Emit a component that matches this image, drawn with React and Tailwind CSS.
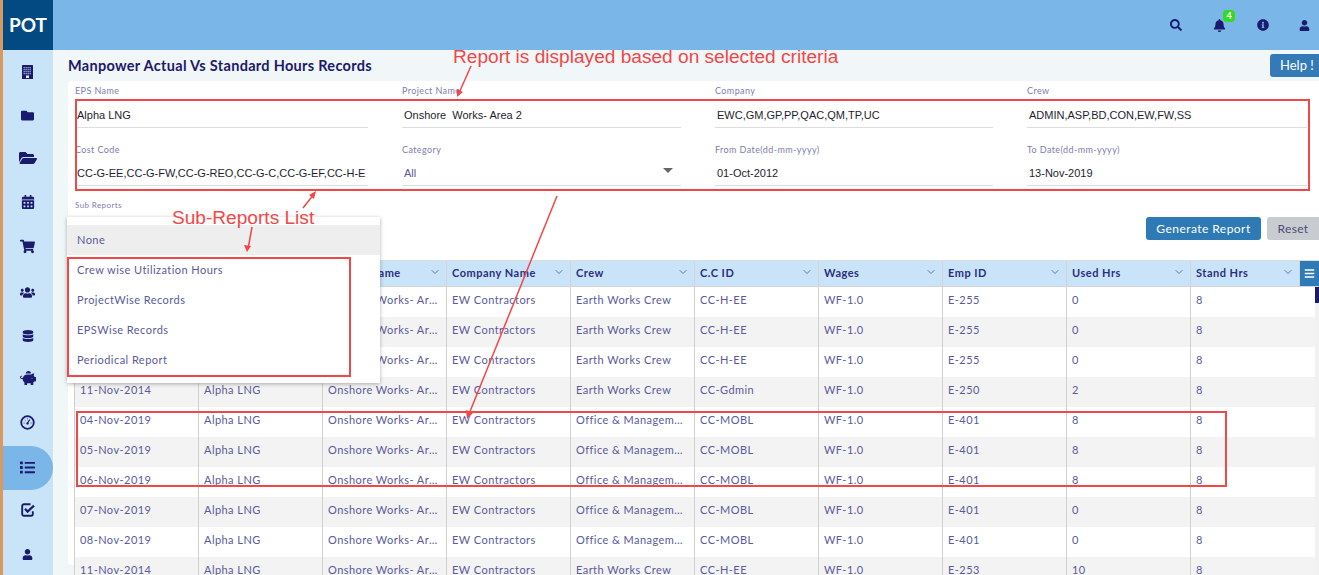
import React from "react";
import { FaFolder, FaFolderOpen, FaCalendarAlt, FaShoppingCart, FaUsers, FaDatabase, FaPiggyBank, FaList, FaUser, FaSearch, FaBell, FaInfoCircle, FaBars } from "react-icons/fa";
import { ChevronDown } from "lucide-react";

const lato = "font-['Lato','Noto_Sans',sans-serif]";

function BuildingIcon() {
  return (
    <svg width="11" height="14" viewBox="0 0 11 14">
      <rect width="11" height="14" rx="0.5" fill="#1a1a6e" />
      <g fill="#8f9fd0">
        {[2, 4, 6, 8].map((y) => [1.5, 3.5, 5.5, 7.5].map((x) => <rect key={`${x}-${y}`} x={x} y={y} width="1.4" height="1.3" />))}
      </g>
      <rect x="4" y="10.5" width="3" height="2.5" fill="#e8eefa" />
    </svg>
  );
}

function GaugeIcon() {
  return (
    <svg width="15" height="15" viewBox="0 0 15 15" fill="none">
      <circle cx="7.5" cy="7.5" r="6.3" stroke="#1a1a6e" strokeWidth="1.8" />
      <path d="M7.5 8 L9.8 4.6" stroke="#1a1a6e" strokeWidth="1.2" />
      <circle cx="7.5" cy="8.4" r="1.2" fill="#1a1a6e" />
      <path d="M3.6 8 H4.6 M4.8 5 L5.5 5.6 M7.5 3.4 V4.4 M10.6 8 H11.5" stroke="#1a1a6e" strokeWidth="0.9" />
    </svg>
  );
}

function CheckIcon() {
  return (
    <svg width="14" height="14" viewBox="0 0 14 14" fill="none">
      <path d="M11.8 8.2 V11 A1.8 1.8 0 0 1 10 12.8 H3 A1.8 1.8 0 0 1 1.2 11 V3 A1.8 1.8 0 0 1 3 1.2 H9.5" stroke="#1a1a6e" strokeWidth="1.9" />
      <path d="M4 5.8 L6.6 8.6 L13 2.6" stroke="#1a1a6e" strokeWidth="2.2" />
    </svg>
  );
}

const side = [
  [<BuildingIcon />, "pb-[1px]"], [<FaFolder size={13} />, "pb-[1px]"], [<FaFolderOpen size={18} />, "pb-[4px]"], [<FaCalendarAlt size={14} />, "pb-[4px]"],
  [<FaShoppingCart size={15} />, "pb-[4px]"], [<FaUsers size={15} />, "pb-0"], [<FaDatabase size={12} />, "pb-0"], [<FaPiggyBank size={16} />, "pb-[4px]"],
  [<GaugeIcon />, "pb-[4px]"], [<FaList size={15} />, "pb-[2px]"], [<CheckIcon />, "pb-[4px]"], [<FaUser size={11} />, "pb-[4px]"],
];

const fields = [
  ["EPS Name", "Alpha LNG", "w-[293px]"],
  ["Project Name", "Onshore  Works- Area 2", "w-[279px]"],
  ["Company", "EWC,GM,GP,PP,QAC,QM,TP,UC", "w-[278px]"],
  ["Crew", "ADMIN,ASP,BD,CON,EW,FW,SS", "w-[280px]"],
  ["Cost Code", "CC-G-EE,CC-G-FW,CC-G-REO,CC-G-C,CC-G-EF,CC-H-E", "w-[293px]"],
  ["Category", "All", "w-[279px]", true],
  ["From Date(dd-mm-yyyy)", "01-Oct-2012", "w-[278px]"],
  ["To Date(dd-mm-yyyy)", "13-Nov-2019", "w-[280px]"],
];

const heads = ["Date", "EPS Name", "Project Name", "Company Name", "Crew", "C.C ID", "Wages", "Emp ID", "Used Hrs", "Stand Hrs"];

const ew = "Earth Works Crew";
const om = "Office & Management Crew";
const rows = [
  ["08-Nov-2014", ew, "CC-H-EE", "E-255", "0"],
  ["09-Nov-2014", ew, "CC-H-EE", "E-255", "0"],
  ["10-Nov-2014", ew, "CC-H-EE", "E-255", "0"],
  ["11-Nov-2014", ew, "CC-Gdmin", "E-250", "2"],
  ["04-Nov-2019", om, "CC-MOBL", "E-401", "8"],
  ["05-Nov-2019", om, "CC-MOBL", "E-401", "8"],
  ["06-Nov-2019", om, "CC-MOBL", "E-401", "8"],
  ["07-Nov-2019", om, "CC-MOBL", "E-401", "0"],
  ["08-Nov-2019", om, "CC-MOBL", "E-401", "0"],
  ["11-Nov-2014", ew, "CC-H-EE", "E-253", "10"],
];

function Field({ label, value, width, select, first }) {
  return (
    <div className={`${width} relative`}>
      <div className="h-[19px] text-[9px] leading-[19px] tracking-[0.4px] text-[#7d7db0] whitespace-nowrap">{label}</div>
      <div className={`${first ? "h-[28px] pt-[3px]" : "h-[27px] pt-[2px]"} pl-[2px] border-b border-[#dedede] flex items-center whitespace-pre text-[11px] font-['Liberation_Sans',sans-serif] ${select ? "text-[#5a5a96]" : "text-[#1e1e2e]"}`}>
        {value}
      </div>
      {select && <div className="absolute right-[8px] top-[28px] w-0 h-0 border-l-[5px] border-r-[5px] border-t-[5px] border-l-transparent border-r-transparent border-t-[#666]" />}
    </div>
  );
}

function Annotations() {
  return (
    <>
      <div className="absolute left-[75px] top-[99px] w-[1235px] h-[92px] border-2 border-[#f04848] pointer-events-none" />
      <div className="absolute left-[67px] top-[257px] w-[284px] h-[120px] border-2 border-[#f04848] pointer-events-none" />
      <div className="absolute left-[76px] top-[411px] w-[1151px] h-[76px] border-2 border-[#f04848] pointer-events-none" />
      <div className="absolute left-[453px] top-[46px] text-[19.1px] leading-[22px] text-[#f04848] whitespace-nowrap font-['Liberation_Sans',sans-serif]">Report is displayed based on selected criteria</div>
      <div className="absolute left-[172px] top-[207px] text-[19.1px] leading-[22px] text-[#f04848] whitespace-nowrap font-['Liberation_Sans',sans-serif]">Sub-Reports List</div>
      <svg className="absolute left-0 top-0 pointer-events-none" width="1319" height="575" fill="none">
        <g stroke="#f04848" strokeWidth="1.5">
          <path d="M471 66 L459 93" />
          <path d="M303 208 L314 194" />
          <path d="M252 227 L248 249" />
          <path d="M557 196 L469 414" />
        </g>
        <g fill="#f04848">
          <path d="M457 97 L457 89 L463 92 Z" />
          <path d="M316 191 L314 199 L309 195 Z" />
          <path d="M247 252 L244 245 L251 246 Z" />
          <path d="M467 419 L466 410 L473 413 Z" />
        </g>
      </svg>
    </>
  );
}

export default function App() {
  return (
    <div className={`relative w-[1319px] h-[575px] overflow-hidden flex bg-[#f1f6f9] ${lato}`}>
      <div className="w-[53px] shrink-0 border-l-[3px] border-[#d99a62] bg-[#c9e4f9] flex flex-col">
        <div className="h-[50px] shrink-0 bg-[#034a83] flex items-center justify-center text-white text-[19px] font-bold">POT</div>
        {side.map(([icon, pad], i) => (
          <div key={i} className={`h-11 shrink-0 pr-[1px] ${pad} flex items-center justify-center text-[#1a1a6e] ${i === 9 ? "bg-[#7ab6e8] rounded-r-[22px]" : ""}`}>
            {icon}
          </div>
        ))}
      </div>

      <div className="flex-1 min-w-0 flex flex-col">
        <div className="h-[50px] shrink-0 bg-[#7ab6e8] flex items-center justify-end text-[#1a1a6e]">
          <FaSearch size={12} className="mr-[31px]" />
          <div className="relative mr-[31px]">
            <FaBell size={13} />
            <span className="absolute left-[10px] top-[-9px] w-3 h-3 rounded-sm bg-[#35d822] text-white text-[9px] font-bold leading-[12px] text-center">4</span>
          </div>
          <FaInfoCircle size={12} className="mr-[30px]" />
          <FaUser size={11} className="mr-[9px]" />
        </div>

        <div className="h-[31px] shrink-0 flex items-start justify-between pl-[15px]">
          <h1 className="mt-[7px] text-[14.5px] leading-[18px] font-bold tracking-[0.3px] text-[#1b1a6b]">Manpower Actual Vs Standard Hours Records</h1>
          <button className="mt-[4px] w-[49px] h-[23px] pl-[10px] text-left rounded-l-[3px] bg-[#337ab7] text-white text-[13px]">Help !</button>
        </div>

        <div className="h-[484px] shrink-0 ml-[15px] bg-white rounded-l-[4px] pl-[7px] flex flex-col">
          <div className="grid grid-cols-[327px_313px_312px_1fr] gap-y-[12px] shrink-0">
            {fields.map(([l, v, w, s], i) => <Field key={l} label={l} value={v} width={w} select={s} first={i < 4} />)}
          </div>
          <div className="mt-[13px] h-[12px] shrink-0 text-[8px] leading-[12px] tracking-[0.4px] text-[#7d7db0]">Sub Reports</div>
          <div className="mt-[6px] flex justify-end gap-[6px] h-[23px] shrink-0">
            <button className="w-[115px] rounded-[3px] bg-[#2e7ab5] text-white text-[12px] tracking-[0.45px]">Generate Report</button>
            <button className="w-[52px] rounded-l-[3px] bg-[#c8ccd0] text-[#4a4a7a] text-[12px] tracking-[0.3px]">Reset</button>
          </div>

          <div className="mt-[20px] border-t border-[#dcdcdc] flex h-[27px] shrink-0 bg-[#c9e4f9] border-b border-b-[#d4d4d4]">
            {heads.map((h, i) => (
              <div key={h} className={`h-full shrink-0 pl-[5px] pr-[5px] flex items-center justify-between border-r border-[#d4d4d4] ${i === 9 ? "w-[109px]" : "w-[124px]"}`}>
                <span className="text-[11px] font-bold tracking-[0.5px] text-[#2d2d80] whitespace-nowrap">{h}</span>
                <ChevronDown size={12} strokeWidth={1.5} className="text-[#4a4a90] mb-[4px]" />
              </div>
            ))}
            <div className="flex-1 bg-[#2e7ab5] flex items-center justify-center text-white"><FaBars size={11} /></div>
          </div>

          <div className="flex shrink-0">
            <div className="w-[1240px] shrink-0">
              {rows.map((r, i) => {
                const cells = [r[0], "Alpha LNG", "Onshore Works- Area 2", "EW Contractors", r[1], r[2], "WF-1.0", r[3], r[4], "8"];
                return (
                  <div key={i} className={`flex h-[30px] ${i % 2 ? "bg-[#f3f3f3]" : "bg-white"}`}>
                    {cells.map((c, j) => (
                      <div key={j} className={`w-[124px] shrink-0 pl-[5px] pr-[6px] pt-[6px] text-[11px] leading-[14px] tracking-[0.45px] text-[#5a5a9c] truncate border-r border-[#d0d0d0] ${j === 0 ? "shadow-[-1px_0_0_#d0d0d0]" : ""} ${j === 9 ? "border-r-0" : ""}`}>{c}</div>
                    ))}
                  </div>
                );
              })}
            </div>
            <div className="w-[4px] shrink-0 bg-[#f1f1f1]">
              <div className="h-[16px] bg-[#1a1a6e]" />
            </div>
          </div>
        </div>
      </div>

      <div className="absolute left-[67px] top-[217px] w-[313px] h-[166px] bg-white shadow-[0_1px_4px_rgba(0,0,0,0.3)] pt-[8px] text-[11px] tracking-[0.45px] text-[#5a5a9c]">
        {["None", "Crew wise Utilization Hours", "ProjectWise Records", "EPSWise Records", "Periodical Report"].map((t, i) => (
          <div key={t} className={`h-[30px] pl-[10px] flex items-center ${i === 0 ? "bg-[#eeeeee]" : ""}`}>{t}</div>
        ))}
      </div>

      <Annotations />
    </div>
  );
}
